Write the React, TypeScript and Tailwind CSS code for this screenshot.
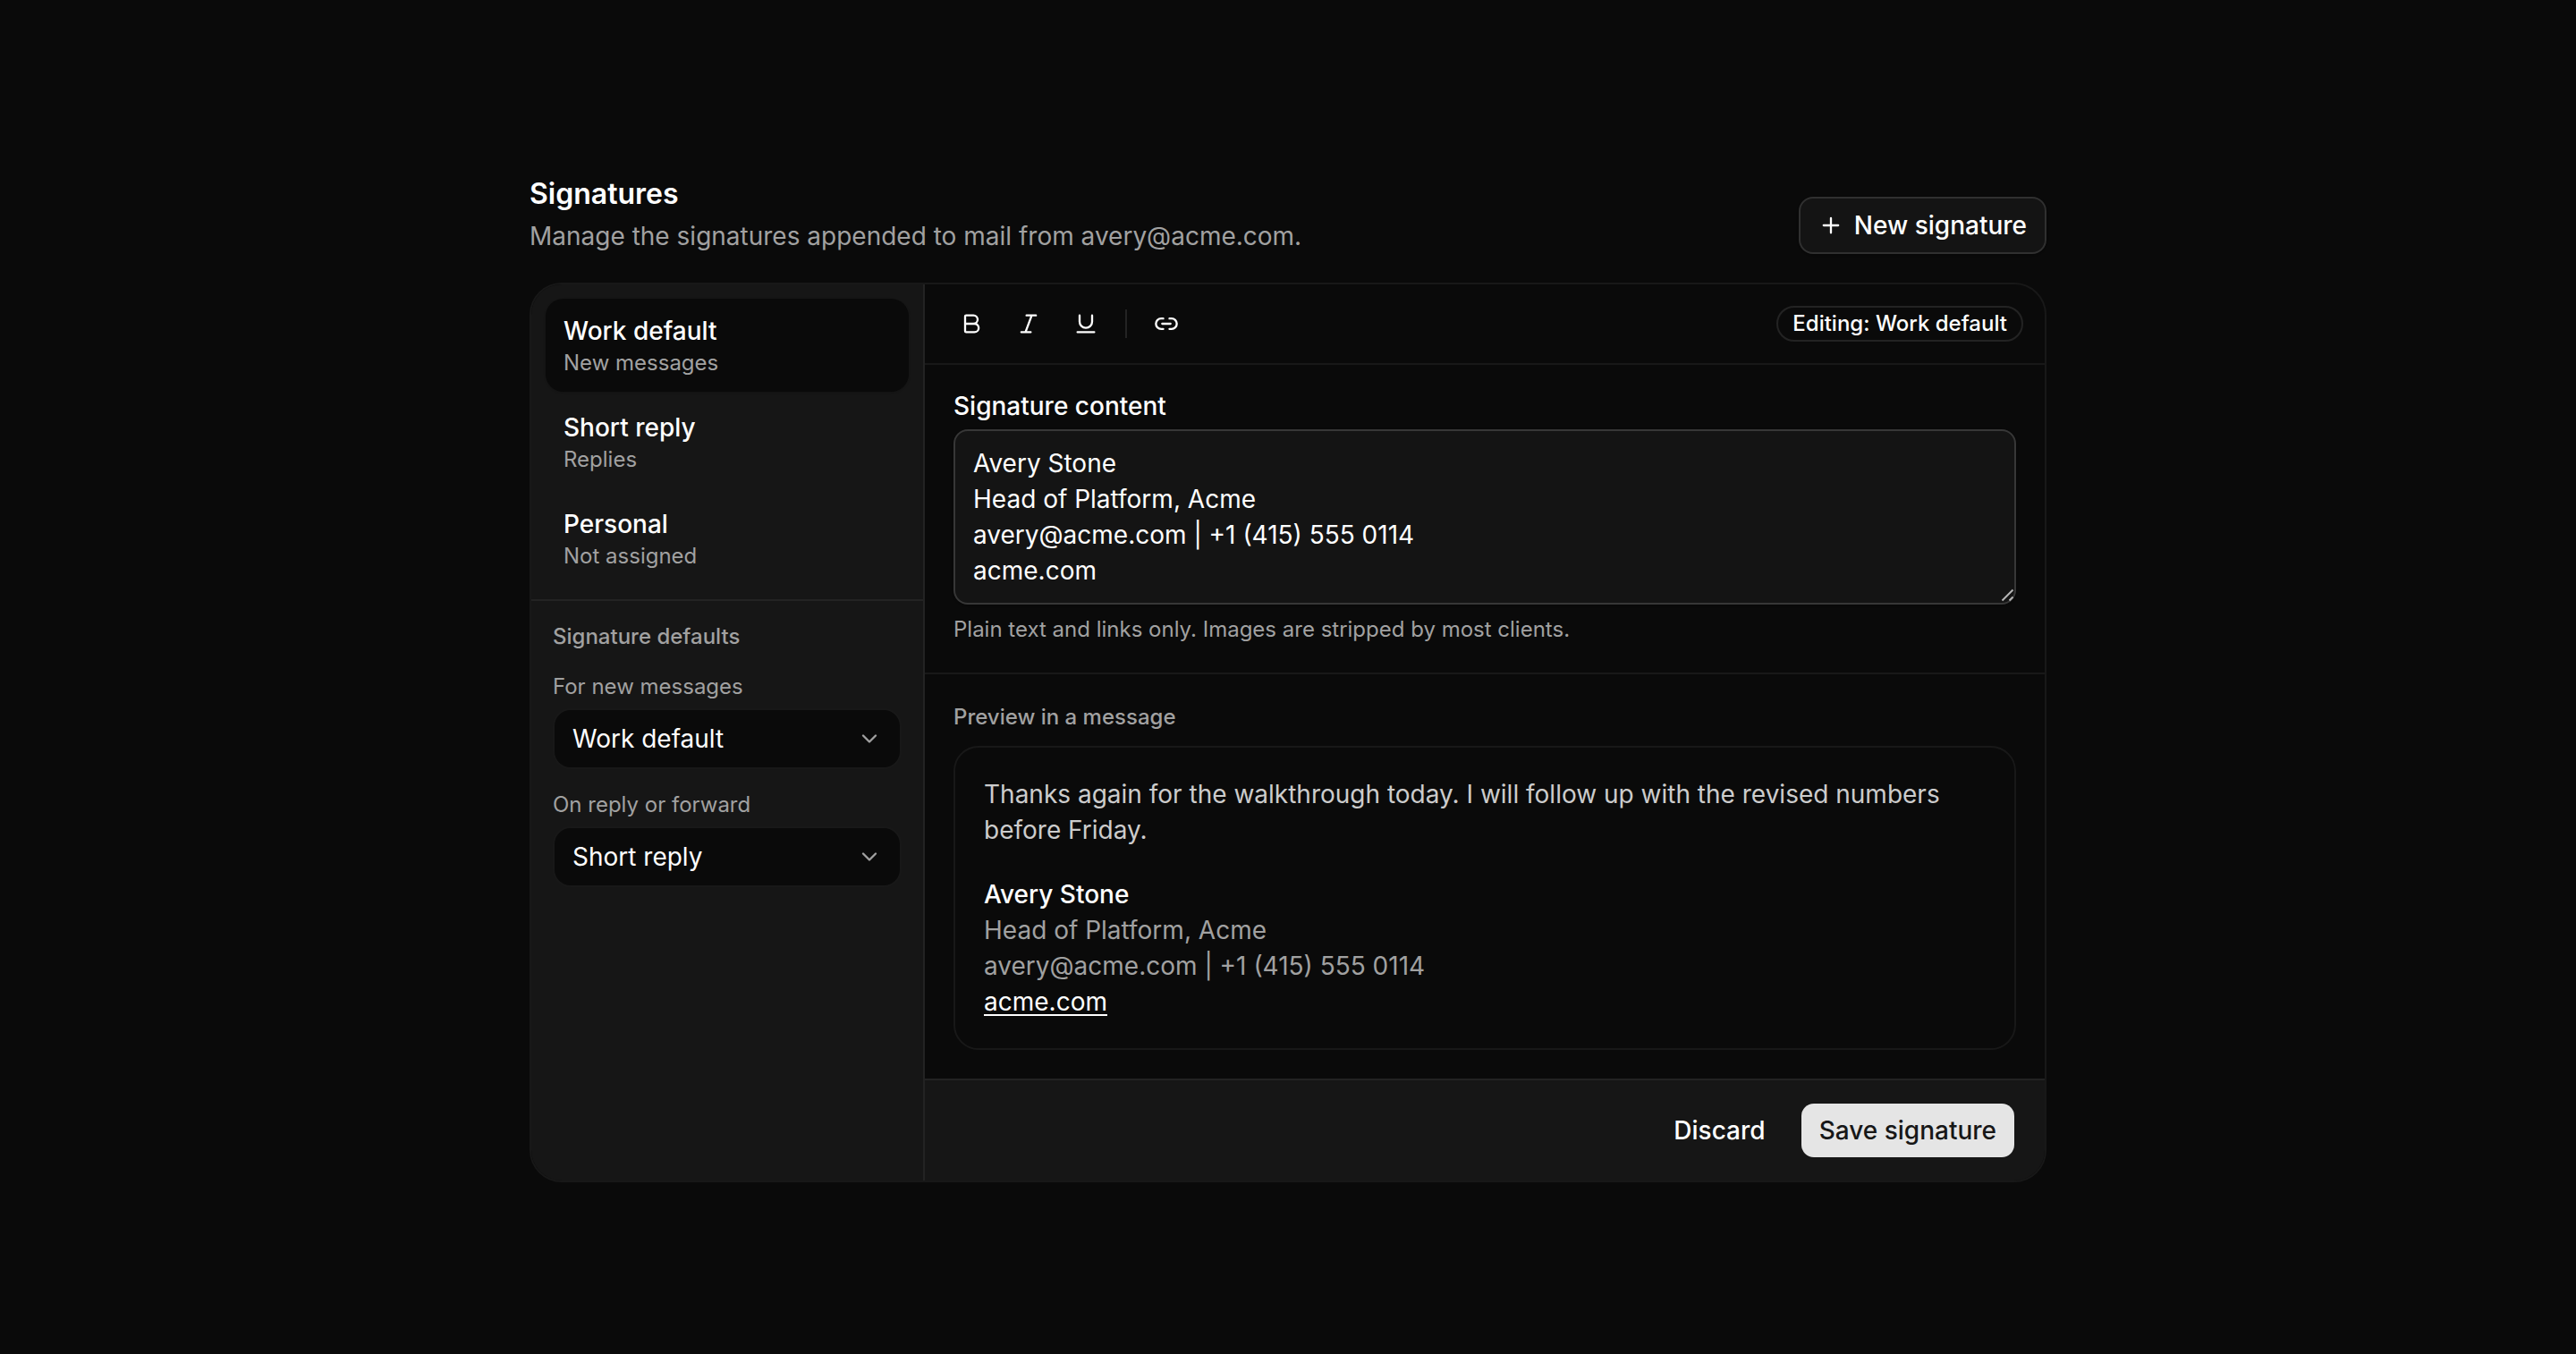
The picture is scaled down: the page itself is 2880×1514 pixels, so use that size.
import React, { useState } from "react";
import clsx from "clsx";

const SIGNATURES = [
  { id: "work", name: "Work default", usage: "New messages" },
  { id: "short", name: "Short reply", usage: "Replies" },
  { id: "personal", name: "Personal", usage: "Not assigned" },
];

const CONTENT = `Avery Stone
Head of Platform, Acme
avery@acme.com | +1 (415) 555 0114
acme.com`;

// --- Icons ---

const Icon = ({ children, className }: { children: React.ReactNode; className?: string }) => (
  <svg
    viewBox="0 0 24 24"
    fill="none"
    stroke="currentColor"
    strokeWidth="2"
    strokeLinecap="round"
    strokeLinejoin="round"
    aria-hidden="true"
    className={clsx("size-7 shrink-0", className)}
  >
    {children}
  </svg>
);

const PlusIcon = () => (
  <Icon>
    <path d="M12 5v14M5 12h14" />
  </Icon>
);

const BoldIcon = () => (
  <Icon>
    <path d="M6 12h9a4 4 0 0 1 0 8H7a1 1 0 0 1-1-1V5a1 1 0 0 1 1-1h7a4 4 0 0 1 0 8" />
  </Icon>
);

const ItalicIcon = () => (
  <Icon>
    <path d="M19 4h-9M14 20H5M15 4 9 20" />
  </Icon>
);

const UnderlineIcon = () => (
  <Icon>
    <path d="M6 4v6a6 6 0 0 0 12 0V4M4 20h16" />
  </Icon>
);

const LinkIcon = () => (
  <Icon>
    <path d="M9 17H7A5 5 0 0 1 7 7h2M15 7h2a5 5 0 1 1 0 10h-2M8 12h8" />
  </Icon>
);

const ChevronIcon = () => (
  <Icon className="pointer-events-none absolute right-[22px] top-1/2 -translate-y-1/2 text-[#a1a1a1]">
    <path d="m6 9 6 6 6-6" />
  </Icon>
);

// Drawn over the textarea corner, the native grip stays draggable underneath
const ResizeGrip = () => (
  <svg
    viewBox="0 0 16 16"
    fill="none"
    stroke="currentColor"
    strokeWidth="2"
    aria-hidden="true"
    className="pointer-events-none absolute bottom-0.5 right-0.5 size-4 text-[#b4b4b4]"
  >
    <path d="M2.5 13.5 14.5 1.5M10.5 13.5l4-4" />
  </svg>
);

// --- Controls ---

const ToolButton = ({ label, children }: { label: string; children: React.ReactNode }) => (
  <button
    type="button"
    aria-label={label}
    className="flex size-14 items-center justify-center rounded-2xl hover:bg-white/10"
  >
    {children}
  </button>
);

interface DefaultSelectProps {
  id: string;
  label: string;
  value: string;
  onChange: (value: string) => void;
}

const DefaultSelect = ({ id, label, value, onChange }: DefaultSelectProps) => (
  <div className="flex flex-col gap-2">
    <label htmlFor={id} className="text-2xl text-[#a1a1a1]">
      {label}
    </label>
    <div className="relative">
      <select
        id={id}
        value={value}
        onChange={(e) => onChange(e.target.value)}
        className="block w-full appearance-none rounded-[20px] border-2 border-white/6 bg-[#0a0a0a] py-3 pl-5 pr-14 text-[28px] leading-10"
      >
        {SIGNATURES.map((s) => (
          <option key={s.id} value={s.id}>
            {s.name}
          </option>
        ))}
      </select>
      <ChevronIcon />
    </div>
  </div>
);

// --- Panels ---

const Sidebar = ({ active, onSelect }: { active: string; onSelect: (id: string) => void }) => {
  const [newDefault, setNewDefault] = useState("work");
  const [replyDefault, setReplyDefault] = useState("short");

  return (
    <aside className="w-[440px] shrink-0 border-r-2 border-white/6 bg-[#161616]">
      <nav className="flex flex-col gap-1 p-4">
        {SIGNATURES.map((s) => (
          <button
            key={s.id}
            type="button"
            onClick={() => onSelect(s.id)}
            className={clsx(
              "flex flex-col rounded-[20px] px-5 py-4 text-left",
              s.id === active && "bg-[#0a0a0a] shadow-sm"
            )}
          >
            <span className="text-[28px] font-medium leading-10">{s.name}</span>
            <span className="text-2xl text-[#a1a1a1]">{s.usage}</span>
          </button>
        ))}
      </nav>
      <div className="flex flex-col gap-6 border-t-2 border-white/6 p-6">
        <h2 className="text-2xl font-medium text-[#a1a1a1]">Signature defaults</h2>
        <DefaultSelect id="new-default" label="For new messages" value={newDefault} onChange={setNewDefault} />
        <DefaultSelect id="reply-default" label="On reply or forward" value={replyDefault} onChange={setReplyDefault} />
      </div>
    </aside>
  );
};

const Toolbar = ({ name }: { name: string }) => (
  <div className="flex items-center gap-2 border-b-2 border-white/6 px-6 py-4">
    <ToolButton label="Bold">
      <BoldIcon />
    </ToolButton>
    <ToolButton label="Italic">
      <ItalicIcon />
    </ToolButton>
    <ToolButton label="Underline">
      <UnderlineIcon />
    </ToolButton>
    <div className="mx-2 h-8 w-0.5 bg-white/10" />
    <ToolButton label="Insert link">
      <LinkIcon />
    </ToolButton>
    <span className="ml-auto rounded-full border-2 border-white/10 px-4 py-0.5 text-2xl font-medium">
      Editing: {name}
    </span>
  </div>
);

const Preview = ({ content }: { content: string }) => {
  const lines = content.split("\n");

  return (
    <section className="flex flex-col gap-4 p-8">
      <h2 className="text-2xl font-medium text-[#a1a1a1]">Preview in a message</h2>
      <div className="flex flex-col gap-8 rounded-[28px] border-2 border-white/6 p-8 text-[28px] leading-10">
        <p className="text-[#cccccc]">
          Thanks again for the walkthrough today. I will follow up with the revised numbers before Friday.
        </p>
        <div className="text-[#a1a1a1]">
          {lines.map((line, i) => {
            if (i === 0) return <p key={i} className="font-medium text-white">{line}</p>;
            if (i === lines.length - 1) {
              return (
                <p key={i}>
                  <a href="#" className="text-white underline decoration-2 underline-offset-4">
                    {line}
                  </a>
                </p>
              );
            }
            return <p key={i}>{line}</p>;
          })}
        </div>
      </div>
    </section>
  );
};

export default function App() {
  const [active, setActive] = useState("work");
  const [content, setContent] = useState(CONTENT);
  const current = SIGNATURES.find((s) => s.id === active) ?? SIGNATURES[0];

  return (
    <main className="flex min-h-screen items-center justify-center bg-[#0a0a0a] font-['Inter','Liberation_Sans',sans-serif] text-white">
      <div className="flex w-full max-w-[1696px] flex-col gap-8">
        <header className="flex items-end justify-between">
          <div className="flex flex-col gap-0.5">
            <h1 className="text-[32px] font-semibold leading-[50px]">Signatures</h1>
            <p className="text-[28px] leading-10 text-[#a1a1a1]">
              Manage the signatures appended to mail from avery@acme.com.
            </p>
          </div>
          <button
            type="button"
            className="flex h-16 items-center gap-3 rounded-2xl border-2 border-white/12 bg-[#141414] px-5 text-[28px] font-medium leading-10 shadow-sm"
          >
            <PlusIcon />
            New signature
          </button>
        </header>

        <div className="flex overflow-hidden rounded-[36px] border-2 border-white/6">
          <Sidebar active={active} onSelect={setActive} />
          <div className="min-w-0 flex-1">
            <Toolbar name={current.name} />
            <div className="flex flex-col gap-3 border-b-2 border-white/6 p-8">
              <label htmlFor="content" className="text-[28px] font-medium leading-7">
                Signature content
              </label>
              <div className="relative">
                <textarea
                  id="content"
                  rows={4}
                  value={content}
                  onChange={(e) => setContent(e.target.value)}
                  className="block w-full resize-y rounded-2xl border-2 border-white/15 bg-[#141414] px-5 py-4 text-[28px] leading-10 shadow-sm [&::-webkit-resizer]:bg-transparent"
                />
                <ResizeGrip />
              </div>
              <p className="text-2xl text-[#a1a1a1]">
                Plain text and links only. Images are stripped by most clients.
              </p>
            </div>
            <Preview content={content} />
            <footer className="flex justify-end gap-4 border-t-2 border-white/6 bg-[#161616] px-8 py-6">
              <button
                type="button"
                className="h-16 rounded-2xl border-2 border-transparent px-5 text-[28px] font-medium leading-10"
              >
                Discard
              </button>
              <button
                type="button"
                className="h-16 rounded-2xl border-2 border-transparent bg-[#e5e5e5] bg-clip-padding px-5 text-[28px] font-medium leading-10 text-[#171717]"
              >
                Save signature
              </button>
            </footer>
          </div>
        </div>
      </div>
    </main>
  );
}
